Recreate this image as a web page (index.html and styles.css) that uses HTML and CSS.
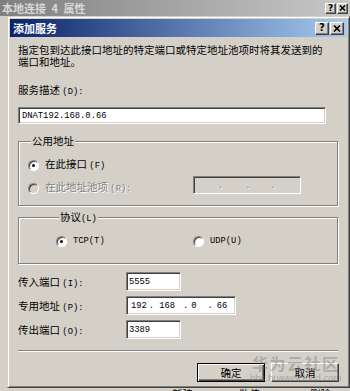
FILE: index.html
```html
<!DOCTYPE html>
<html lang="zh-CN">
<head>
<meta charset="utf-8">
<title>添加服务</title>
<link rel="stylesheet" href="styles.css">
</head>
<body>
<div class="screen">
  <div class="outer-title">
    <span class="caption">本地连接 4 属性</span>
    <div class="tbtns small">
      <span class="tb">?</span>
      <span class="tb"><svg width="7" height="6" viewBox="0 0 8 7"><path d="M1 0.5 L7 6.5 M7 0.5 L1 6.5" stroke="#000" stroke-width="1.7"/></svg></span>
    </div>
  </div>
  <div class="outer-body">
    <div class="dialog">
      <div class="title">
        <span class="caption">添加服务</span>
        <div class="tbtns">
          <span class="tb">?</span>
          <span class="tb"><svg width="8" height="7" viewBox="0 0 8 7"><path d="M1 0.5 L7 6.5 M7 0.5 L1 6.5" stroke="#000" stroke-width="1.7"/></svg></span>
        </div>
      </div>
      <div class="content">
        <p class="desc">指定包到达此接口地址的特定端口或特定地址池项时将其发送到的<br>端口和地址。</p>
        <div class="lbl svc-lbl">服务描述 <span class="a">(D):</span></div>
        <div class="edit svc-edit"><span class="a">DNAT192.168.0.66</span></div>

        <div class="group g-public">
          <span class="legend">公用地址</span>
          <div class="opt row1"><span class="radio on"></span><span>在此接口 <span class="a">(F)</span></span></div>
          <div class="row2">
            <div class="opt dis"><span class="radio"></span><span>在此地址池项 <span class="a">(R):</span></span></div>
            <div class="edit ipdis"><span class="a dd d1">.</span><span class="a dd d2">.</span><span class="a dd d3">.</span></div>
          </div>
        </div>

        <div class="group g-proto">
          <span class="legend">协议<span class="a">(L)</span></span>
          <div class="proto-row">
            <div class="opt tcp"><span class="radio on"></span><span class="a">TCP(T)</span></div>
            <div class="opt"><span class="radio"></span><span class="a">UDP(U)</span></div>
          </div>
        </div>

        <div class="fields">
          <div class="field"><span class="flabel">传入端口 <span class="a">(I):</span></span><div class="edit port"><span class="a">5555</span></div></div>
          <div class="field"><span class="flabel">专用地址 <span class="a">(P):</span></span><div class="edit ip"><span class="a o1">192</span><span class="a o2">.</span><span class="a o3">168</span><span class="a o4">.</span><span class="a o5">0</span><span class="a o6">.</span><span class="a o7">66</span></div></div>
          <div class="field"><span class="flabel">传出端口 <span class="a">(O):</span></span><div class="edit port"><span class="a">3389</span></div></div>
        </div>

        <div class="sep"></div>
        <div class="buttons">
          <button class="btn default">确定</button>
          <button class="btn">取消</button>
        </div>
      </div>
    </div>
    <div class="under">
      <span class="u1">新建</span>
      <span class="u2">数值</span>
      <span class="u3">删除</span>
    </div>
  </div>
  <div class="watermark">华为云社区</div>
  <div class="wm-url">bbs.huaweicloud.com</div>
</div>
</body>
</html>
```

FILE: styles.css
```css
* { box-sizing: border-box; }

body {
  margin: 0;
  background: #d4d0c8;
  font-family: "Noto Sans CJK SC", sans-serif;
  font-size: 10.5px;
  color: #000;
}

.screen {
  width: 350px;
  height: 391px;
  overflow: hidden;
  position: relative;
  background: #d4d0c8;
}

.a {
  font-family: "Liberation Mono", monospace;
  font-size: 8.8px;
}

/* outer (inactive) window title */
.outer-title {
  height: 16px;
  background: linear-gradient(to right, #808080, #c8c8c8);
  display: flex;
  align-items: center;
  justify-content: space-between;
  padding: 0 2px 0 2px;
}
.outer-title .caption {
  color: #d8d8d8;
  font-weight: bold;
  font-size: 11px;
  line-height: 14px;
  word-spacing: 3px;
}

.tbtns { display: flex; gap: 1px; }
.tb {
  width: 14px;
  height: 13px;
  background: #d4d0c8;
  border: 1px solid;
  border-color: #fff #404040 #404040 #fff;
  box-shadow: inset -1px -1px 0 #808080;
  display: flex;
  align-items: center;
  justify-content: center;
  font: bold 10px "DejaVu Sans", sans-serif;
  line-height: 10px;
}
.small .tb { width: 11px; height: 11px; font-size: 9px; }

.outer-body {
  padding-left: 7px;
  display: flex;
  flex-direction: column;
}

/* dialog */
.dialog {
  width: 343px;
  height: 372px;
  border: 1px solid;
  border-color: #d4d0c8 #404040 #404040 #d4d0c8;
  box-shadow: inset 1px 1px 0 #fff, inset -1px -1px 0 #808080;
  padding: 2px;
  background: #d4d0c8;
  display: flex;
  flex-direction: column;
}

.title {
  height: 18px;
  background: linear-gradient(to right, #0a246a, #a6caf0);
  display: flex;
  align-items: center;
  justify-content: space-between;
  padding: 0 3px 0 3px;
}
.title .caption {
  color: #fff;
  font-weight: bold;
  font-size: 11px;
  line-height: 14px;
}

.content {
  padding: 7px 0 0 8px;
  display: flex;
  flex-direction: column;
  align-items: flex-start;
}

.desc {
  margin: 0;
  line-height: 12px;
  white-space: nowrap;
}

.lbl { line-height: 12px; }
.svc-lbl { margin-top: 16px; }

.edit {
  background: #fff;
  border: 1px solid;
  border-color: #808080 #fff #fff #808080;
  box-shadow: inset 1px 1px 0 #404040, inset -1px -1px 0 #d4d0c8;
  display: flex;
  align-items: center;
  padding-left: 2px;
}
.svc-edit {
  margin-top: 9px;
  width: 308px;
  height: 17px;
  padding-left: 3px;
}

/* group boxes */
.group {
  width: 320px;
  border: 1px solid #808080;
  box-shadow: inset 1px 1px 0 #fff, 1px 1px 0 #fff;
  display: flex;
  flex-direction: column;
  align-items: flex-start;
}
.legend {
  margin-top: -7px;
  margin-left: 3px;
  padding: 0 1px;
  line-height: 12px;
  background: #d4d0c8;
}
.g-public {
  margin-top: 17px;
  padding: 0 0 10px 9px;
}
.g-proto {
  margin-top: 11px;
  padding: 0 0 15px 37px;
}

.opt {
  display: flex;
  align-items: center;
  gap: 6px;
  height: 14px;
  line-height: 14px;
}
.row1 { margin-top: 11px; }
.row2 {
  margin-top: 3px;
  display: flex;
  align-items: center;
}
.row2 .opt {
  width: 165px;
  margin-top: 6px;
}
.dis {
  color: #808080;
  text-shadow: 1px 1px 0 #fff;
}

.radio {
  width: 11px;
  height: 11px;
  border-radius: 50%;
  background: #fff;
  border: 1px solid;
  border-color: #808080 #fff #fff #808080;
  box-shadow: inset 1px 1px 0 #404040;
  display: flex;
  align-items: center;
  justify-content: center;
  flex: none;
}
.radio.on::after {
  content: "";
  width: 3px;
  height: 3px;
  border-radius: 50%;
  background: #000;
}
.dis .radio { background: #d4d0c8; }

.ipdis {
  width: 108px;
  height: 18px;
  background: #d4d0c8;
  color: #808080;
  text-shadow: 1px 1px 0 #fff;
  align-items: flex-end;
  padding-bottom: 2px;
}
.dd { line-height: 10px; }
.d1 { margin-left: 22px; }
.d2 { margin-left: 22px; }
.d3 { margin-left: 20px; }

.proto-row {
  margin-top: 9px;
  display: flex;
  align-items: center;
}
.tcp { width: 137px; }

/* fields */
.fields {
  margin-top: 8px;
  display: flex;
  flex-direction: column;
  gap: 5px;
}
.field {
  display: flex;
  align-items: center;
  height: 19px;
}
.flabel {
  width: 108px;
  line-height: 12px;
  margin-top: 2px;
}
.port { width: 55px; height: 19px; padding-left: 2px; }
.ip { width: 110px; height: 19px; padding-left: 0; }
.o1 { margin-left: 4px; }
.o2 { margin-left: 2px; }
.o3 { margin-left: 5px; }
.o4 { margin-left: 8px; }
.o5 { margin-left: 3px; }
.o6 { margin-left: 11px; }
.o7 { margin-left: 4px; }

.sep {
  width: 320px;
  height: 2px;
  margin-top: 11px;
  border-top: 1px solid #808080;
  border-bottom: 1px solid #fff;
}

.buttons {
  margin-top: 11px;
  width: 321px;
  display: flex;
  justify-content: flex-end;
  gap: 6px;
}
.btn {
  width: 68px;
  height: 19px;
  padding: 0;
  background: #d4d0c8;
  font-family: "Noto Sans CJK SC", sans-serif;
  font-size: 10.5px;
  color: #000;
  border: 1px solid;
  border-color: #fff #404040 #404040 #fff;
  box-shadow: inset -1px -1px 0 #808080;
  line-height: 15px;
}
.btn.default {
  border: 1px solid #000;
  box-shadow: inset 1px 1px 0 #fff, inset -1px -1px 0 #404040, inset -2px -2px 0 #808080;
}

.under {
  height: 10px;
  display: flex;
  align-items: flex-start;
  font-size: 10.5px;
  line-height: 12px;
}
.u1 { margin-left: 165px; }
.u2 { margin-left: 46px; }
.u3 { margin-left: 50px; }

.watermark {
  position: absolute;
  left: 252px;
  top: 353px;
  font-size: 16px;
  font-weight: bold;
  letter-spacing: 1.5px;
  color: rgba(110, 110, 110, 0.4);
  line-height: 20px;
  white-space: nowrap;
}
.wm-url {
  position: absolute;
  left: 250px;
  top: 372px;
  font-family: "Liberation Sans", sans-serif;
  font-size: 9.5px;
  line-height: 11px;
  color: rgba(120, 120, 120, 0.55);
  white-space: nowrap;
}
```
